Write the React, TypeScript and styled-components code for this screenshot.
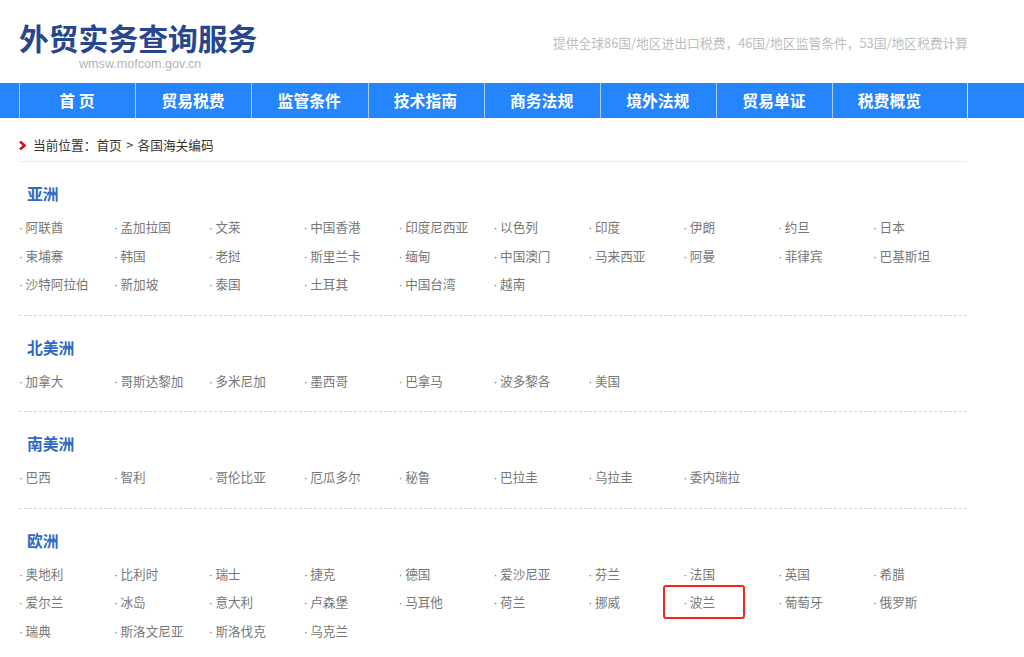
import React from "react";
import styled, { createGlobalStyle } from "styled-components";

const Global = createGlobalStyle`
  html, body { margin: 0; padding: 0; background: #fff; overflow: hidden; }
  body { font-family: "Noto Sans CJK SC", "Liberation Sans", sans-serif; }
`;
const Page = styled.div`width: 1024px; height: 657px; overflow: hidden;`;
const Header = styled.header`
  height: 83px; box-sizing: border-box; padding: 0 56px 0 19px;
  display: flex; justify-content: space-between; align-items: flex-start;
`;
const Brand = styled.div`display: flex; flex-direction: column; padding-top: 16px;`;
const Title = styled.div`
  font-size: 29.8px; line-height: 42px; font-weight: 700; color: #26468f; white-space: nowrap;
`;
const Domain = styled.div`
  font: 12.6px/14px "Liberation Sans", sans-serif; color: #b4b4b4; padding-left: 60px; margin-top: -1px;
`;
const Slogan = styled.div`
  font-size: 12.77px; line-height: 18px; color: #bdbdbd; padding-top: 34px; white-space: nowrap;
`;
const Nav = styled.nav`
  height: 35px; background: #2585fe; padding-left: 19px; display: flex;
`;
const NavItem = styled.a<{ $wide?: boolean }>`
  box-sizing: border-box; width: ${p => (p.$wide ? "135.6px" : "116.2px")};
  border-left: 1px solid #a9cffc;
  ${p => (p.$wide ? "border-right: 1px solid #d3e6fd;" : "")}
  color: #fff; font-size: 15.8px; font-weight: 700; line-height: 35px;
  padding-left: ${p => (p.$wide ? "24.5px" : "0")};
  padding-right: ${p => (p.$wide ? "0" : "1.5px")};
  text-align: ${p => (p.$wide ? "left" : "center")};
  white-space: pre;
`;
const Main = styled.main`width: 948px; margin-left: 19px;`;
const Crumb = styled.div`
  height: 44px; box-sizing: border-box; padding-top: 18px; border-bottom: 1px solid #ececec;
  display: flex; align-items: flex-start; gap: 7px; font-size: 12.7px; line-height: 18px; color: #333;
  word-spacing: 1.5px;
`;
const Chevron = styled.svg`width: 7px; height: 9px; margin-top: 5px; flex: none;`;
const Section = styled.section<{ $last?: boolean }>`
  padding: 18px 0 ${p => (p.$last ? "0" : "16px")};
  border-bottom: ${p => (p.$last ? "none" : "1px dashed #d4d4d4")};
`;
const Heading = styled.h2`
  margin: 0 0 5px 8px; font-size: 15.8px; line-height: 28px; font-weight: 700; color: #2f6ac6;
`;
const Grid = styled.ul`
  margin: 0; padding: 0; list-style: none;
  display: grid; grid-template-columns: repeat(10, 94.9px); grid-auto-rows: 28.5px;
`;
const Cell = styled.li`
  position: relative; font-size: 12.6px; line-height: 28.5px; color: #777; white-space: nowrap;
  &::before {
    content: "·"; display: inline-block; width: 6.6px;
    font: 12px/1 "Liberation Sans", sans-serif;
  }
`;
const Marker = styled.span`
  position: absolute; left: -20px; top: -3px; width: 82px; height: 34px; box-sizing: border-box;
  border: 2px solid #f5251c; border-radius: 3px;
`;

const sections = [
  { name: "亚洲", items: "阿联酋 孟加拉国 文莱 中国香港 印度尼西亚 以色列 印度 伊朗 约旦 日本 柬埔寨 韩国 老挝 斯里兰卡 缅甸 中国澳门 马来西亚 阿曼 菲律宾 巴基斯坦 沙特阿拉伯 新加坡 泰国 土耳其 中国台湾 越南" },
  { name: "北美洲", items: "加拿大 哥斯达黎加 多米尼加 墨西哥 巴拿马 波多黎各 美国" },
  { name: "南美洲", items: "巴西 智利 哥伦比亚 厄瓜多尔 秘鲁 巴拉圭 乌拉圭 委内瑞拉" },
  { name: "欧洲", items: "奥地利 比利时 瑞士 捷克 德国 爱沙尼亚 芬兰 法国 英国 希腊 爱尔兰 冰岛 意大利 卢森堡 马耳他 荷兰 挪威 波兰 葡萄牙 俄罗斯 瑞典 斯洛文尼亚 斯洛伐克 乌克兰" },
];
const nav = ["首 页", "贸易税费", "监管条件", "技术指南", "商务法规", "境外法规", "贸易单证", "税费概览"];

export default function App() {
  return (
    <Page>
      <Global />
      <Header>
        <Brand>
          <Title>外贸实务查询服务</Title>
          <Domain>wmsw.mofcom.gov.cn</Domain>
        </Brand>
        <Slogan>提供全球86国/地区进出口税费，46国/地区监管条件，53国/地区税费计算</Slogan>
      </Header>
      <Nav>
        {nav.map((n, i) => <NavItem key={n} $wide={i === nav.length - 1}>{n}</NavItem>)}
      </Nav>
      <Main>
        <Crumb>
          <Chevron viewBox="0 0 7 9"><path d="M1 .5 L5.6 4.5 L1 8.5" fill="none" stroke="#d01414" strokeWidth="2.6" /></Chevron>
          <span>当前位置：首页 &gt; 各国海关编码</span>
        </Crumb>
        {sections.map((s, i) => (
          <Section key={s.name} $last={i === sections.length - 1}>
            <Heading>{s.name}</Heading>
            <Grid>
              {s.items.split(" ").map(it => (
                <Cell key={it}>{it}{it === "波兰" && <Marker />}</Cell>
              ))}
            </Grid>
          </Section>
        ))}
      </Main>
    </Page>
  );
}
